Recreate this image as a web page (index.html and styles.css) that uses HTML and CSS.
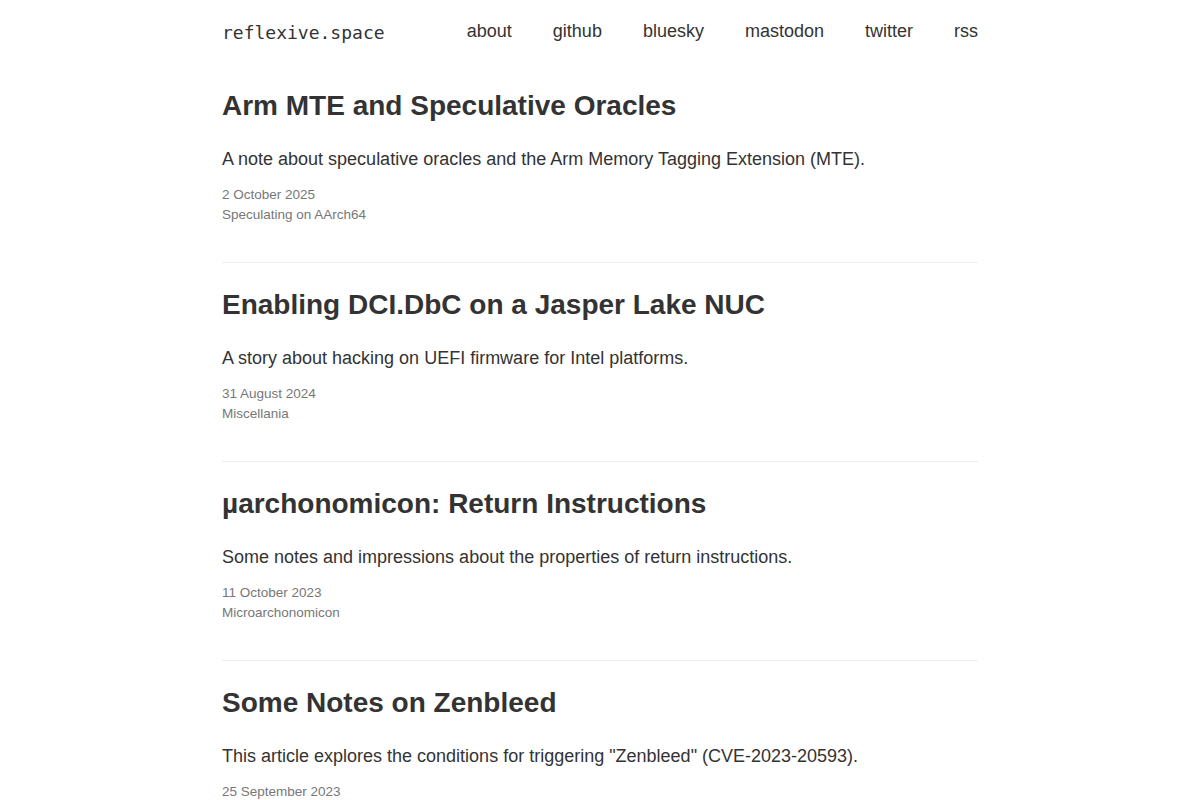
FILE: index.html
```html
<!DOCTYPE html>
<html lang="en">
  <head>
    <meta charset="UTF-8" />
    <meta name="viewport" content="width=device-width, initial-scale=1.0" />
    <title>reflexive.space</title>
    <link rel="stylesheet" href="styles.css">
  </head>
  <body>
    <div class="wrap">
      <header class="site-header">
        <a class="logo" href="#">reflexive.space</a>
        <nav class="nav">
          <a href="#">about</a>
          <a href="#">github</a>
          <a href="#">bluesky</a>
          <a href="#">mastodon</a>
          <a href="#">twitter</a>
          <a href="#">rss</a>
        </nav>
      </header>

      <main>
        <article class="post">
          <h2 class="post-title">Arm MTE and Speculative Oracles</h2>
          <p class="post-desc">A note about speculative oracles and the Arm Memory Tagging Extension (MTE).</p>
          <div class="post-meta">
            <div>2 October 2025</div>
            <div>Speculating on AArch64</div>
          </div>
        </article>

        <article class="post">
          <h2 class="post-title">Enabling DCI.DbC on a Jasper Lake NUC</h2>
          <p class="post-desc">A story about hacking on UEFI firmware for Intel platforms.</p>
          <div class="post-meta">
            <div>31 August 2024</div>
            <div>Miscellania</div>
          </div>
        </article>

        <article class="post">
          <h2 class="post-title">µarchonomicon: Return Instructions</h2>
          <p class="post-desc">Some notes and impressions about the properties of return instructions.</p>
          <div class="post-meta">
            <div>11 October 2023</div>
            <div>Microarchonomicon</div>
          </div>
        </article>

        <article class="post">
          <h2 class="post-title">Some Notes on Zenbleed</h2>
          <p class="post-desc">This article explores the conditions for triggering "Zenbleed" (CVE-2023-20593).</p>
          <div class="post-meta">
            <div>25 September 2023</div>
            <div>Miscellania</div>
          </div>
        </article>
      </main>
    </div>
  </body>
</html>
```

FILE: styles.css
```css
body {
  font-family: "Liberation Sans", Arial, sans-serif;
  color: #333;
  background: #fff;
  margin: 0;
  padding: 0;
}
a {
  color: #333;
  text-decoration: none;
}
.wrap {
  width: 756px;
  margin: 0 auto;
}
.site-header {
  display: flex;
  justify-content: space-between;
  align-items: center;
  height: 64px;
}
.logo {
  font-family: "DejaVu Sans Mono", monospace;
  font-size: 18px;
  padding-top: 1px;
}
.nav {
  display: flex;
  gap: 41px;
  font-size: 18px;
  padding-bottom: 2px;
}
.post {
  padding: 25px 0 37px;
  border-bottom: 1px solid #eee;
}
.post-title {
  font-size: 28px;
  line-height: 34px;
  margin: 0;
  font-weight: bold;
}
.post-desc {
  font-size: 18px;
  line-height: 27px;
  margin: 23px 0 12px;
}
.post-meta {
  font-size: 13.5px;
  line-height: 20px;
  color: #777;
}
```
